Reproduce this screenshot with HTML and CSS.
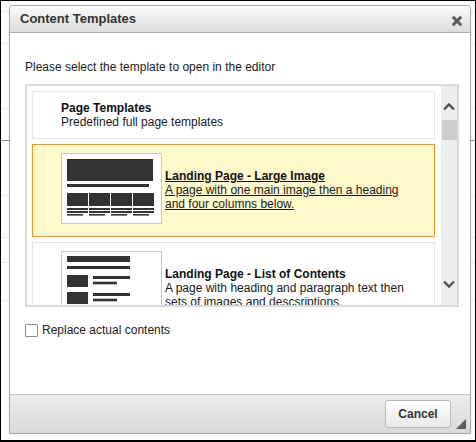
FILE: index.html
```html
<!DOCTYPE html>
<html>
<head>
<meta charset="utf-8">
<link rel="stylesheet" href="styles.css">
</head>
<body>
<div class="screen">
  <div class="backdrop">
    <div class="bg-row r1"></div>
    <div class="bg-row r2"></div>
    <div class="bg-row r3"></div>
    <div class="bg-row r4 dark"></div>
    <div class="bg-row r5"></div>
    <div class="bg-row r6"></div>
    <div class="bg-row r7"></div>
    <div class="bg-row r8"></div>
  </div>
  <div class="dialog">
    <div class="dlg-header">
      <span class="dlg-title">Content Templates</span>
      <svg class="close" width="12" height="12" viewBox="0 0 12 12"><path d="M1.8 1.8 L10.2 10.2 M10.2 1.8 L1.8 10.2" stroke="#5a5a5a" stroke-width="3" stroke-linecap="butt"/></svg>
    </div>
    <div class="dlg-body">
      <p class="intro">Please select the template to open in the editor</p>
      <div class="listbox">
        <div class="list">
          <div class="item item-plain">
            <div class="text">
              <div class="title">Page Templates</div>
              <div class="desc">Predefined full page templates</div>
            </div>
          </div>
          <div class="item item-thumb selected">
            <div class="thumb-wrap">
              <div class="thumb">
                <svg width="99" height="69" viewBox="0 0 99 69" fill="#333">
                  <rect x="5" y="5" width="86" height="22"/>
                  <rect x="5" y="30" width="82" height="3"/>
                  <rect x="5" y="39" width="21" height="13"/>
                  <rect x="27" y="39" width="21" height="13"/>
                  <rect x="49" y="39" width="21" height="13"/>
                  <rect x="71" y="39" width="21" height="13"/>
                  <rect x="5" y="54" width="21" height="2"/>
                  <rect x="27" y="54" width="21" height="2"/>
                  <rect x="49" y="54" width="21" height="2"/>
                  <rect x="71" y="54" width="21" height="2"/>
                  <rect x="5" y="57" width="21" height="2"/>
                  <rect x="27" y="57" width="21" height="2"/>
                  <rect x="49" y="57" width="21" height="2"/>
                  <rect x="71" y="57" width="21" height="2"/>
                  <rect x="5" y="60" width="16" height="1.6"/>
                  <rect x="27" y="60" width="16" height="1.6"/>
                  <rect x="49" y="60" width="16" height="1.6"/>
                  <rect x="71" y="60" width="16" height="1.6"/>
                </svg>
              </div>
            </div>
            <div class="text under">
              <div class="title">Landing Page - Large Image</div>
              <div class="desc">A page with one main image then a heading and four columns below.</div>
            </div>
          </div>
          <div class="item item-thumb">
            <div class="thumb-wrap">
              <div class="thumb">
                <svg width="99" height="69" viewBox="0 0 99 69" fill="#333">
                  <rect x="5" y="4" width="63" height="6"/>
                  <rect x="5" y="14" width="63" height="3"/>
                  <rect x="5" y="23" width="21" height="12"/>
                  <rect x="31" y="24" width="37" height="3"/>
                  <rect x="31" y="29.7" width="24" height="2.6"/>
                  <rect x="5" y="40" width="21" height="12"/>
                  <rect x="31" y="41" width="37" height="3"/>
                  <rect x="31" y="46.7" width="24" height="2.6"/>
                  <rect x="5" y="57" width="21" height="8"/>
                  <rect x="31" y="58" width="37" height="3"/>
                </svg>
              </div>
            </div>
            <div class="text">
              <div class="title">Landing Page - List of Contents</div>
              <div class="desc">A page with heading and paragraph text then sets of images and descsriptions.</div>
            </div>
          </div>
        </div>
        <div class="scrollbar">
          <svg class="chev" width="14" height="10" viewBox="0 0 14 10"><polyline points="2,8.5 7,3.5 12,8.5" fill="none" stroke="#555" stroke-width="2.4"/></svg>
          <div class="sb-thumb"></div>
          <div class="sb-track"></div>
          <svg class="chev" width="14" height="10" viewBox="0 0 14 10"><polyline points="2,2.5 7,7.5 12,2.5" fill="none" stroke="#555" stroke-width="2.4"/></svg>
        </div>
      </div>
      <label class="check"><span class="box"></span><span class="check-label">Replace actual contents</span></label>
    </div>
    <div class="dlg-footer">
      <button class="btn">Cancel</button>
      <svg class="grip" width="10" height="10" viewBox="0 0 10 10"><polygon points="10,0 10,10 0,10" fill="#5c5c5c"/></svg>
    </div>
  </div>
</div>
</body>
</html>
```

FILE: styles.css
```css
* { box-sizing: border-box; }
html, body { margin: 0; padding: 0; }
body {
  font-family: "Liberation Sans", Arial, sans-serif;
  font-size: 12px;
  color: #222;
  background: #fff;
}
.screen {
  position: relative;
  width: 476px;
  height: 442px;
  border: 1px solid #000;
  border-bottom-width: 2px;
  overflow: hidden;
  background: #fff;
}
.backdrop { display: flex; flex-direction: column; }
.bg-row { border-bottom: 1px solid #e4e4e4; flex: none; }
.bg-row.dark { border-bottom-color: #8a8a8a; }
.r1 { height: 11px; }
.r2 { height: 32px; }
.r3 { height: 65px; }
.r4 { height: 32px; }
.r5 { height: 55px; }
.r6 { height: 42px; }
.r7 { height: 25px; }
.r8 { height: 38px; }

.dialog {
  position: absolute;
  left: 8px;
  top: 4px;
  width: 462px;
  height: 429px;
  border: 1px solid #a8a8a8;
  border-radius: 4px 4px 0 0;
  background: #fff;
  display: flex;
  flex-direction: column;
  box-shadow: 0 0 2px rgba(0,0,0,0.12);
}
.dlg-header {
  flex: none;
  height: 27px;
  border-bottom: 1px solid #ababab;
  border-radius: 3px 3px 0 0;
  background: linear-gradient(#fbfbfb, #dcdcdc);
  display: flex;
  align-items: center;
  justify-content: space-between;
  padding: 0 7px 0 10px;
}
.dlg-title {
  font-weight: bold;
  font-size: 13px;
  color: #333;
  line-height: 26px;
}
.close { display: block; margin-top: 3px; }

.dlg-body {
  flex: 1;
  padding: 27px 11px 0 15px;
}
.intro {
  margin: 0;
  line-height: 14px;
  color: #222;
}
.listbox {
  margin-top: 10px;
  width: 434px;
  height: 223px;
  border: 2px solid #dadada;
  display: flex;
}
.list {
  flex: 1;
  overflow: hidden;
  padding: 5px 6px 0 5px;
  display: flex;
  flex-direction: column;
  gap: 5px;
}
.item {
  flex: none;
  border: 1px solid #e6e6e6;
  display: flex;
  align-items: center;
  padding: 9px 18px 9px 28px;
  background: #fff;
}
.item-thumb { padding: 8px 18px 9px 28px; }
.item.selected {
  border-color: #f7941d;
  background: #fff9cc;
}
.thumb-wrap { flex: none; height: 74px; }
.thumb {
  width: 101px;
  height: 71px;
  border: 1px solid #c9c9c9;
  background: #fff;
}
.thumb svg { display: block; }
.thumb-wrap + .text { margin-left: 3px; }
.text { line-height: 14px; color: #1a1a1a; }
.title { font-weight: bold; color: #111; }
.under .title, .under .desc { text-decoration: underline; }

.scrollbar {
  flex: none;
  width: 16px;
  background: #eeeeee;
  display: flex;
  flex-direction: column;
  align-items: center;
  padding: 15px 0 16px;
}
.chev { display: block; flex: none; }
.sb-thumb {
  flex: none;
  width: 15px;
  height: 20px;
  margin-top: 9px;
  margin-left: 1px;
  background: #cdcdcd;
}
.sb-track { flex: 1; }

.check {
  margin-top: 16px;
  height: 14px;
  display: flex;
  align-items: center;
  color: #222;
}
.box {
  flex: none;
  width: 13px;
  height: 13px;
  border: 1px solid #8c8c8c;
  border-radius: 1px;
  background: #fff;
  margin-right: 4px;
}
.check-label { line-height: 14px; }

.dlg-footer {
  position: relative;
  flex: none;
  height: 39px;
  border-top: 1px solid #c6c6c6;
  background: linear-gradient(#ededed, #d9d9d9);
  display: flex;
  justify-content: flex-end;
  align-items: center;
  padding: 0 19px 0 0;
}
.btn {
  width: 66px;
  height: 28px;
  border: 1px solid #b9b9b9;
  border-radius: 3px;
  background: linear-gradient(#ffffff, #e9e9e9);
  font-family: "Liberation Sans", Arial, sans-serif;
  font-size: 12px;
  font-weight: bold;
  color: #333;
  padding: 0;
}
.grip {
  position: absolute;
  right: 4px;
  bottom: 4px;
}
```
